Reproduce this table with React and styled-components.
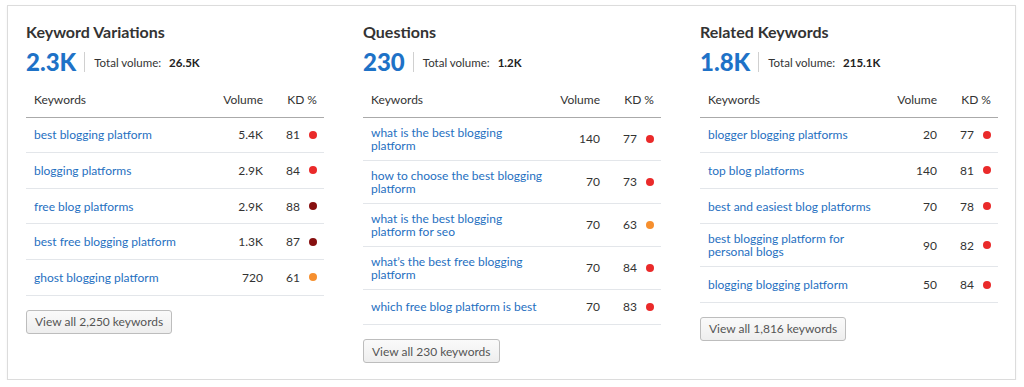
import React from "react";
import styled, { createGlobalStyle } from "styled-components";

const GlobalStyle = createGlobalStyle`
  body {
    margin: 0;
    background: #fff;
    font-family: "Lato", "Open Sans", sans-serif;
  }
`;

const Page = styled.div`
  padding: 5px 8px 0 7px;
`;

const Card = styled.div`
  border: 1px solid #dcdcdc;
  box-shadow: 0 1px 2px rgba(0, 0, 0, 0.06);
  height: 375px;
  box-sizing: border-box;
  padding: 15px 18px 0 18px;
  display: grid;
  grid-template-columns: repeat(3, 298px);
  column-gap: 39px;
`;

const Column = styled.div`
  display: flex;
  flex-direction: column;
`;

const Title = styled.h2`
  margin: 0;
  font-size: 16px;
  font-weight: 700;
  color: #333;
  line-height: 22px;
`;

const Summary = styled.div`
  display: flex;
  align-items: center;
  margin-top: 5px;
  height: 28px;
`;

const Big = styled.span`
  font-size: 24px;
  font-weight: 900;
  color: #1e72c7;
  padding-right: 8px;
  border-right: 1px solid #d0d0d0;
  line-height: 20px;
`;

const TotalLabel = styled.span`
  font-size: 11.5px;
  color: #333;
  margin-left: 9px;
`;

const TotalValue = styled.b`
  font-size: 11.5px;
  color: #222;
  margin-left: 8px;
`;

const Table = styled.div`
  margin-top: 6px;
`;

const Row = styled.div`
  display: grid;
  grid-template-columns: 1fr 50px 54px;
  align-items: center;
  min-height: 35.6px;
  box-sizing: border-box;
  padding: 8px 7px 8px 8px;
  border-bottom: 1px solid ${(p) => (p.head ? "#aaa" : "#e3e6ea")};
  font-size: 12px;
  line-height: 13px;
  color: #333;
`;

const Link = styled.a`
  color: #1f70c1;
  text-decoration: none;
  padding-right: 6px;
`;

const Num = styled.span`
  text-align: right;
`;

const Kd = styled.span`
  display: flex;
  justify-content: flex-end;
  align-items: center;
  gap: 9px;
`;

const Dot = styled.i`
  width: 8px;
  height: 8px;
  border-radius: 50%;
  background: ${(p) => p.color};
`;

const Button = styled.button`
  align-self: flex-start;
  margin-top: 14px;
  height: 24px;
  padding: 0 8px;
  border: 1px solid #bdbdbd;
  border-radius: 3px;
  background: linear-gradient(#fafafa, #eeeeee);
  font-family: inherit;
  font-size: 12px;
  color: #555;
`;

const RED = "#ea2a2a";
const DARK = "#860f0f";
const ORANGE = "#f68f2e";

const columns = [
  {
    title: "Keyword Variations",
    big: "2.3K",
    total: "26.5K",
    button: "View all 2,250 keywords",
    rows: [
      ["best blogging platform", "5.4K", 81, RED],
      ["blogging platforms", "2.9K", 84, RED],
      ["free blog platforms", "2.9K", 88, DARK],
      ["best free blogging platform", "1.3K", 87, DARK],
      ["ghost blogging platform", "720", 61, ORANGE],
    ],
  },
  {
    title: "Questions",
    big: "230",
    total: "1.2K",
    button: "View all 230 keywords",
    rows: [
      ["what is the best blogging platform", "140", 77, RED],
      ["how to choose the best blogging platform", "70", 73, RED],
      ["what is the best blogging platform for seo", "70", 63, ORANGE],
      ["what’s the best free blogging platform", "70", 84, RED],
      ["which free blog platform is best", "70", 83, RED],
    ],
  },
  {
    title: "Related Keywords",
    big: "1.8K",
    total: "215.1K",
    button: "View all 1,816 keywords",
    rows: [
      ["blogger blogging platforms", "20", 77, RED],
      ["top blog platforms", "140", 81, RED],
      ["best and easiest blog platforms", "70", 78, RED],
      ["best blogging platform for personal blogs", "90", 82, RED],
      ["blogging blogging platform", "50", 84, RED],
    ],
  },
];

export default function App() {
  return (
    <Page>
      <GlobalStyle />
      <Card>
        {columns.map((col) => (
          <Column key={col.title}>
            <Title>{col.title}</Title>
            <Summary>
              <Big>{col.big}</Big>
              <TotalLabel>Total volume:</TotalLabel>
              <TotalValue>{col.total}</TotalValue>
            </Summary>
            <Table>
              <Row head>
                <span>Keywords</span>
                <Num>Volume</Num>
                <Num>KD %</Num>
              </Row>
              {col.rows.map(([kw, vol, kd, color]) => (
                <Row key={kw}>
                  <Link href="#">{kw}</Link>
                  <Num>{vol}</Num>
                  <Kd>
                    {kd}
                    <Dot color={color} />
                  </Kd>
                </Row>
              ))}
            </Table>
            <Button>{col.button}</Button>
          </Column>
        ))}
      </Card>
    </Page>
  );
}
